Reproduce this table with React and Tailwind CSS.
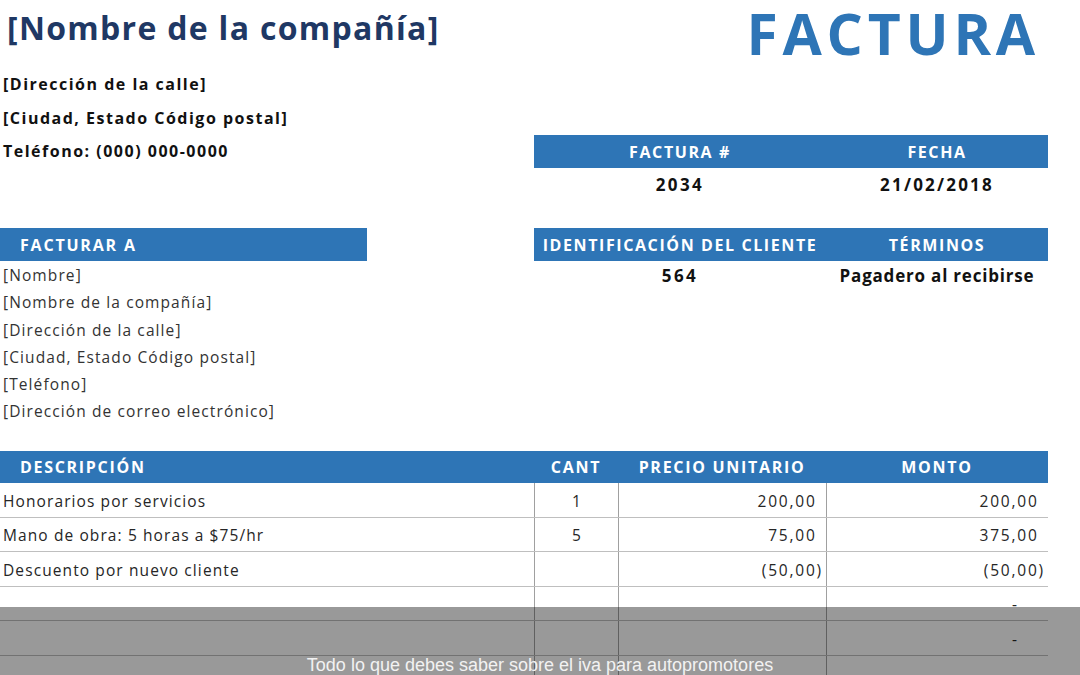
import React from 'react';

const billTo = [
    '[Nombre]',
    '[Nombre de la compañía]',
    '[Dirección de la calle]',
    '[Ciudad, Estado Código postal]',
    '[Teléfono]',
    '[Dirección de correo electrónico]',
];

const items = [
    { desc: 'Honorarios por servicios', qty: '1', price: '200,00', total: '200,00' },
    { desc: 'Mano de obra: 5 horas a $75/hr', qty: '5', price: '75,00', total: '375,00' },
    { desc: 'Descuento por nuevo cliente', qty: '', price: '(50,00)', total: '(50,00)' },
    { desc: '', qty: '', price: '', total: '-' },
    { desc: '', qty: '', price: '', total: '-' },
    { desc: '', qty: '', price: '', total: '' },
];

// Excel-style accounting cell: positives keep room for the closing paren
const Amount = ({ value }) => {
    if (!value) return null;
    if (value === '-') return <span className="pr-[28px]">-</span>;
    const negative = value.startsWith('(');
    return (
        <span className="tracking-[1.8px]">
            {value}
            {!negative && <span className="invisible">)</span>}
        </span>
    );
};

const PairBar = ({ left, right }) => (
    <div className="grid h-[33px] grid-cols-[292px_222px] items-center bg-[#2e75b6] text-[16px] font-bold tracking-[1.6px] text-white">
        <div className="text-center">{left}</div>
        <div className="text-center">{right}</div>
    </div>
);

const PairValues = ({ left, right, height }) => (
    <div className={`grid grid-cols-[292px_222px] items-center text-[17px] font-bold text-[#111] ${height}`}>
        <div className="text-center">{left}</div>
        <div className="text-center">{right}</div>
    </div>
);

export default function App() {
    return (
        <div className="relative h-[675px] w-[1080px] overflow-hidden bg-white font-['Open_Sans',sans-serif] text-[#262626]">
            <div className="w-[1048px]">
                {/* Title row */}
                <div className="flex h-[68px] items-start justify-between">
                    <h1 className="mt-[8px] pl-[7px] text-[32px] font-bold leading-[40px] tracking-[1.3px] text-[#1f3864]">
                        [Nombre de la compañía]
                    </h1>
                    <div className="pr-[8px] text-[57px] font-bold leading-[66px] tracking-[4.8px] text-[#2e75b6]">
                        FACTURA
                    </div>
                </div>

                {/* Sender + invoice number */}
                <div className="grid h-[160px] grid-cols-[534px_514px]">
                    <div className="pl-[3px] text-[16px] font-bold tracking-[1.5px] text-[#111]">
                        <div className="h-[33.5px] leading-[33.5px]">[Dirección de la calle]</div>
                        <div className="h-[33.5px] leading-[33.5px]">[Ciudad, Estado Código postal]</div>
                        <div className="h-[33.5px] leading-[33.5px]">Teléfono: (000) 000-0000</div>
                    </div>
                    <div className="pt-[67px]">
                        <PairBar left="FACTURA #" right="FECHA" />
                        <PairValues
                            left={<span className="tracking-[2.4px]">2034</span>}
                            right={<span className="tracking-[2.2px]">21/02/2018</span>}
                            height="h-[34px]"
                        />
                    </div>
                </div>

                {/* Bill to + client */}
                <div className="grid h-[223px] grid-cols-[534px_514px]">
                    <div>
                        <div className="flex h-[33px] w-[367px] items-center bg-[#2e75b6] pl-5 text-[16px] font-bold tracking-[1.8px] text-white">
                            FACTURAR A
                        </div>
                        <div className="pt-[1px] pl-[3px] text-[15.5px] tracking-[1.1px] text-[#333]">
                            {billTo.map((line) => (
                                <div key={line} className="h-[27.3px] leading-[27.3px]">
                                    {line}
                                </div>
                            ))}
                        </div>
                    </div>
                    <div>
                        <PairBar left="IDENTIFICACIÓN DEL CLIENTE" right="TÉRMINOS" />
                        <PairValues
                            left={<span className="tracking-[2.4px]">564</span>}
                            right={<span className="tracking-[0.8px]">Pagadero al recibirse</span>}
                            height="h-[29px]"
                        />
                    </div>
                </div>

                {/* Line items */}
                <div className="grid h-[32px] grid-cols-[534px_84px_208px_222px] items-center bg-[#2e75b6] text-[16px] font-bold tracking-[1.7px] text-white">
                    <div className="pl-5">DESCRIPCIÓN</div>
                    <div className="text-center">CANT</div>
                    <div className="text-center">PRECIO UNITARIO</div>
                    <div className="text-center">MONTO</div>
                </div>
                {items.map((item, i) => (
                    <div
                        key={i}
                        className="grid h-[34.6px] grid-cols-[534px_84px_208px_222px] border-b border-[#bfbfbf] text-[15.5px]"
                    >
                        <div className="flex items-center pt-[3px] pl-[3px] tracking-[1.1px]">{item.desc}</div>
                        <div className="flex items-center justify-center border-l border-[#a0a0a0] pt-[3px]">{item.qty}</div>
                        <div className="flex items-center justify-end border-l border-[#a0a0a0] pt-[3px] pr-[3px]">
                            <Amount value={item.price} />
                        </div>
                        <div className="flex items-center justify-end border-l border-[#a0a0a0] pt-[3px] pr-[3px]">
                            <Amount value={item.total} />
                        </div>
                    </div>
                ))}
            </div>

            {/* Caption overlay */}
            <div className="absolute bottom-0 left-0 right-0 flex h-[68px] items-end justify-center bg-black/40">
                <span className="font-['Liberation_Sans',Arial,sans-serif] text-[18px] leading-[20px] text-[#f2f2f2]">
                    Todo lo que debes saber sobre el iva para autopromotores
                </span>
            </div>
        </div>
    );
}
